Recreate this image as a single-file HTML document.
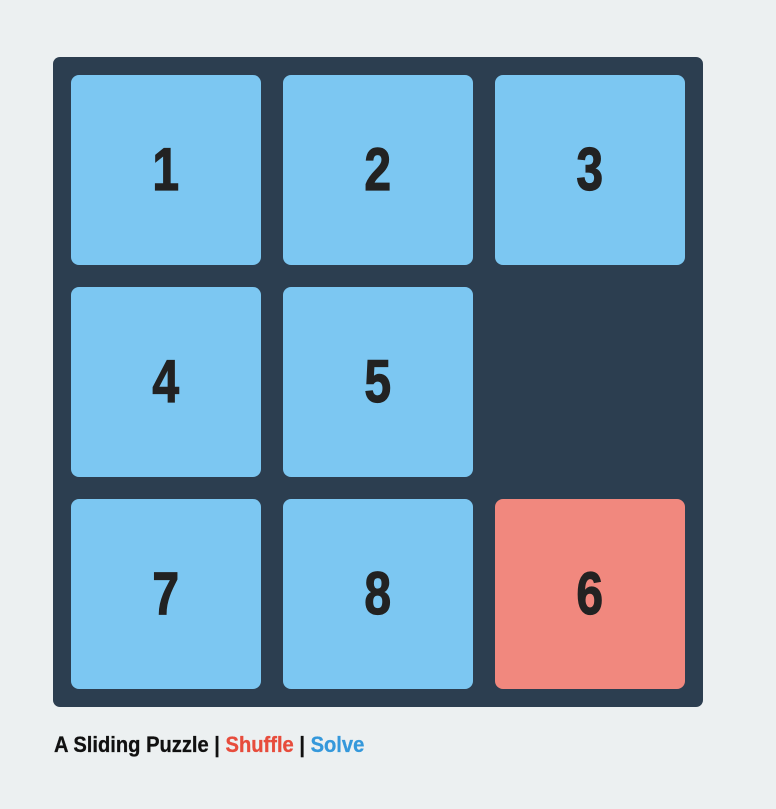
<!DOCTYPE html>
<html><head><style>
html,body{margin:0;padding:0;background:#ecf0f1;width:776px;height:809px;overflow:hidden}
.board{position:absolute;left:53px;top:57px;width:650px;height:650px;background:#2c3e50;border-radius:7px}
.t{position:absolute;width:190px;height:190px;background:#7cc7f2;border-radius:8px;color:#222;font-family:"Liberation Sans",sans-serif;font-weight:bold;font-size:60px;line-height:190px;text-align:center}
.t span{display:inline-block;transform:scaleX(0.8);-webkit-text-stroke:1.2px #222}
.r{background:#f1887e}
.f{position:absolute;left:54px;top:732px;font-family:"Liberation Sans",sans-serif;font-weight:bold;font-size:22px;color:#111;white-space:nowrap;transform:scaleX(0.915);transform-origin:0 0;-webkit-text-stroke:0.3px currentColor}
.s{color:#e74c3c}.v{color:#3498db}
</style></head><body>
<div class="board"></div>
<div class="t" style="left:71px;top:75px"><span>1</span></div>
<div class="t" style="left:283px;top:75px"><span>2</span></div>
<div class="t" style="left:495px;top:75px"><span>3</span></div>
<div class="t" style="left:71px;top:287px"><span>4</span></div>
<div class="t" style="left:283px;top:287px"><span>5</span></div>
<div class="t" style="left:71px;top:499px"><span>7</span></div>
<div class="t" style="left:283px;top:499px"><span>8</span></div>
<div class="t r" style="left:495px;top:499px"><span>6</span></div>
<div class="f">A Sliding Puzzle | <span class="s">Shuffle</span> | <span class="v">Solve</span></div>
</body></html>
